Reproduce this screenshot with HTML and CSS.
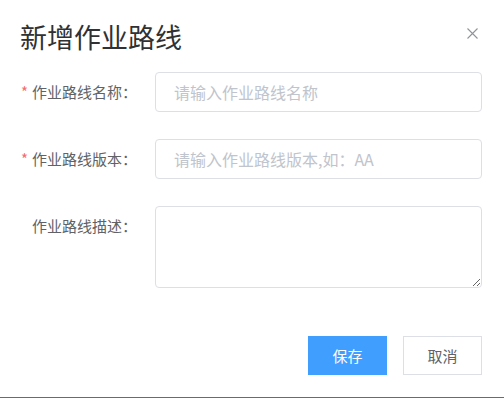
FILE: index.html
```html
<!DOCTYPE html>
<html lang="zh-CN">
<head>
    <meta charset="UTF-8">
    <meta name="viewport" content="width=device-width, initial-scale=1.0">
    <title>新增作业路线</title>
    <link rel="stylesheet" href="styles.css">
</head>
<body>
    <div class="dialog">
        <div class="dialogHeader">
            <span class="dialogTitle">新增作业路线</span>
            <button class="closeBtn" type="button" aria-label="关闭">
                <svg width="11" height="11" viewBox="0 0 11 11">
                    <path d="M0.5 0.5 L10.5 10.5 M10.5 0.5 L0.5 10.5" stroke="#909399" stroke-width="1.1" fill="none"/>
                </svg>
            </button>
        </div>

        <form class="routeForm">
            <div class="formItem">
                <label class="itemLabel required">作业路线名称：</label>
                <input class="itemInput" type="text" placeholder="请输入作业路线名称">
            </div>
            <div class="formItem">
                <label class="itemLabel required">作业路线版本：</label>
                <input class="itemInput" type="text" placeholder="请输入作业路线版本,如：AA">
            </div>
            <div class="formItem">
                <label class="itemLabel">作业路线描述：</label>
                <textarea class="itemInput itemArea"></textarea>
            </div>
        </form>

        <div class="dialogFooter">
            <button class="btn btnPrimary" type="button">保存</button>
            <button class="btn" type="button">取消</button>
        </div>
    </div>
</body>
</html>
```

FILE: styles.css
```css
body{
    margin: 0;
    font-family: "Noto Sans CJK SC", "Liberation Sans", sans-serif;
    background: #fff;
}

.dialog{
    height: 398px;
    box-sizing: border-box;
    border-bottom: 1px solid #6b6b6b;
    display: flex;
    flex-direction: column;
}

.dialogHeader{
    display: flex;
    justify-content: space-between;
    align-items: flex-start;
    padding: 22px 20px 0 20px;
}

.dialogTitle{
    font-size: 27px;
    line-height: 30px;
    color: #303133;
}

.closeBtn{
    margin: 6px 6px 0 0;
    padding: 0;
    border: none;
    background: none;
    width: 11px;
    height: 11px;
    display: flex;
    cursor: pointer;
}

.routeForm{
    margin-top: 20px;
    padding: 0 22px 0 20px;
}

.formItem{
    display: flex;
    align-items: flex-start;
    margin-bottom: 27px;
}

.formItem:last-child{
    margin-bottom: 0;
}

.itemLabel{
    width: 135px;
    flex-shrink: 0;
    box-sizing: border-box;
    padding-right: 18px;
    text-align: right;
    font-size: 15px;
    line-height: 40px;
    color: #606266;
}

.itemLabel.required::before{
    content: "*";
    color: #f56c6c;
    margin-right: 4px;
}

.itemInput{
    flex: 1;
    height: 40px;
    box-sizing: border-box;
    border: 1px solid #dcdfe6;
    border-radius: 4px;
    padding: 0 18px;
    font-family: inherit;
    font-size: 16px;
    color: #606266;
    outline: none;
}

.itemInput::placeholder{
    color: #c0c4cc;
}

.itemArea{
    height: 82px;
    padding: 6px 18px;
    resize: vertical;
}

.dialogFooter{
    margin-top: 48px;
    padding-right: 22px;
    display: flex;
    justify-content: flex-end;
    gap: 16px;
}

.btn{
    width: 79px;
    height: 39px;
    border: 1px solid #dcdfe6;
    background: #fff;
    color: #606266;
    font-family: inherit;
    font-size: 15px;
    padding: 0;
    cursor: pointer;
}

.btnPrimary{
    background: #409eff;
    border-color: #409eff;
    color: #fff;
}
```
